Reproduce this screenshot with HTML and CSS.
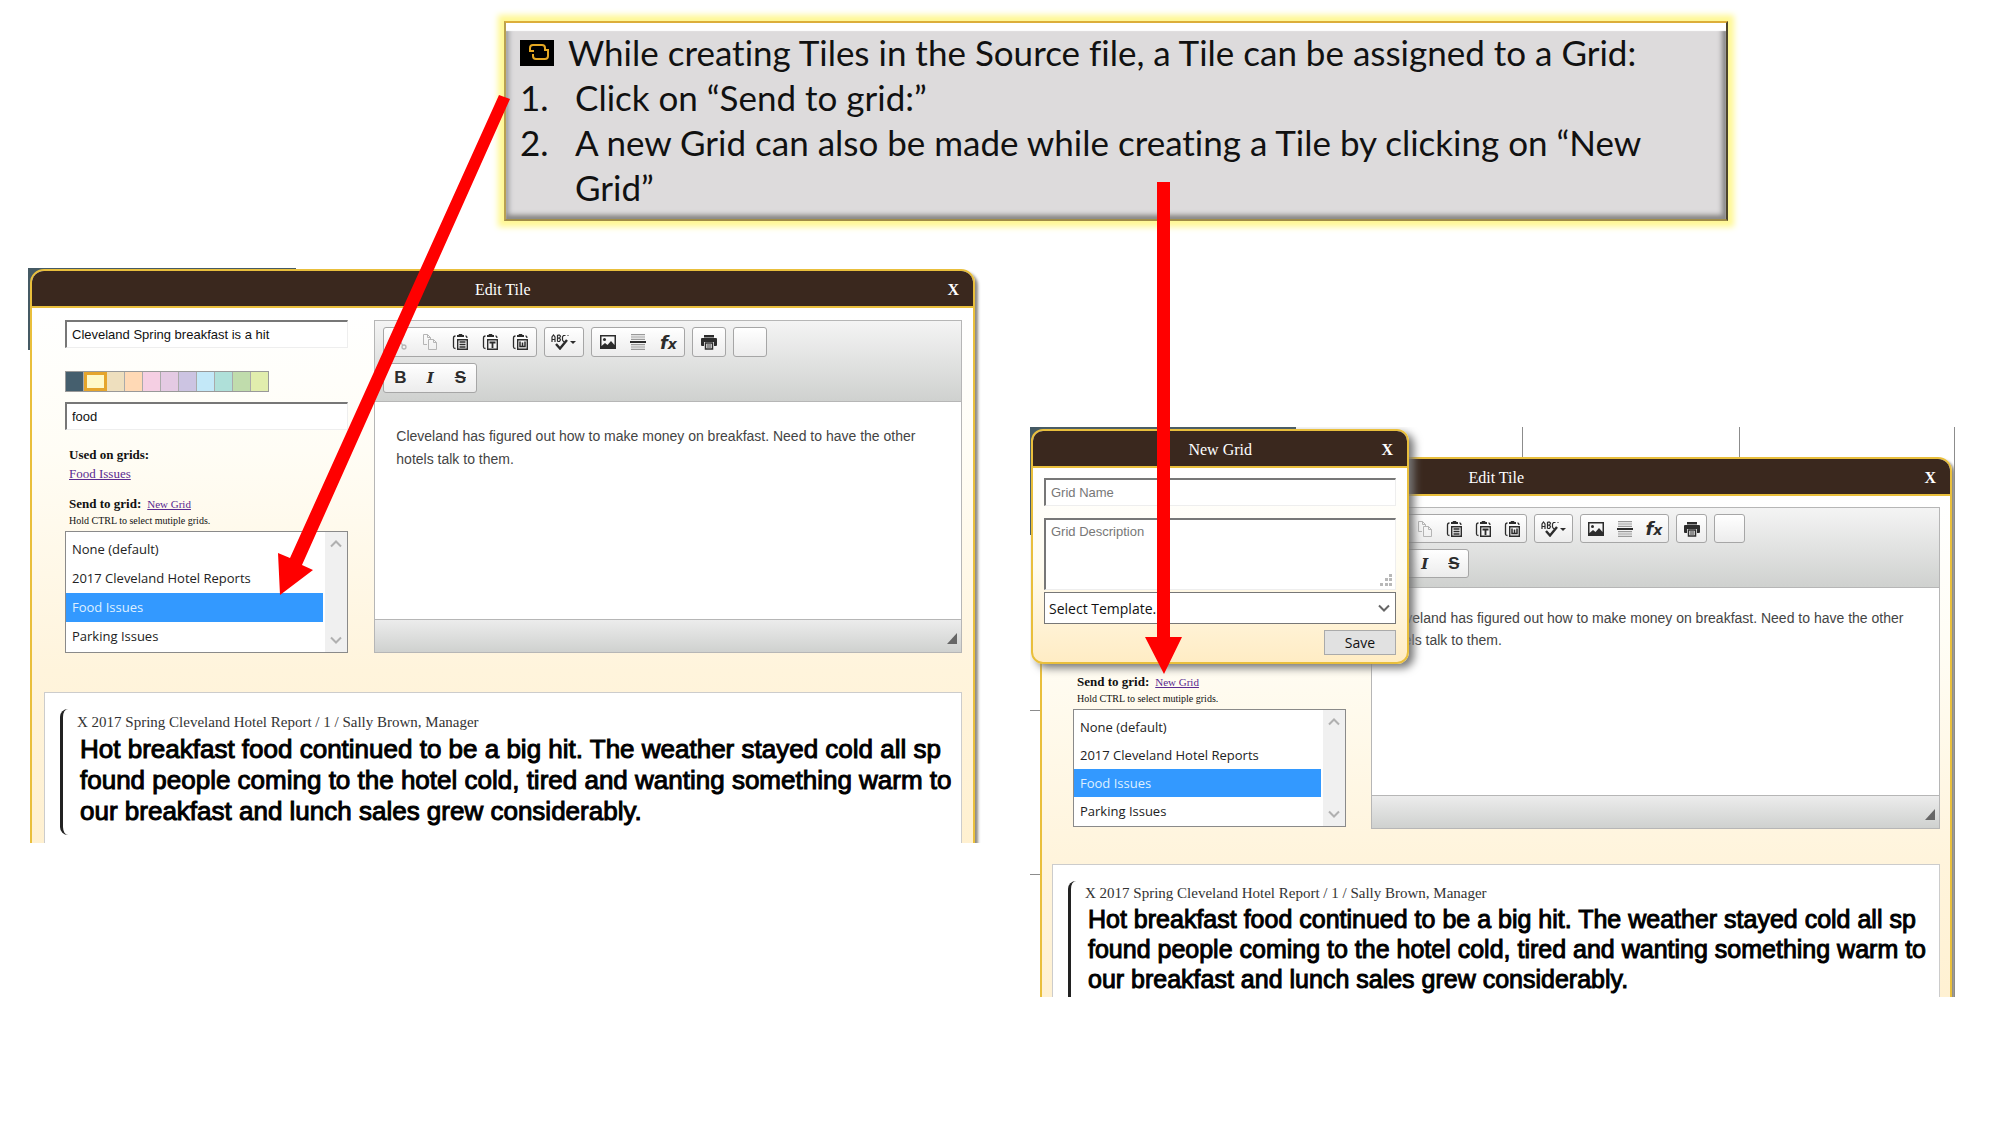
FILE: index.html
```html
<!DOCTYPE html>
<html lang="en">
<head>
<meta charset="utf-8">
<title>Assigning a Tile to a Grid</title>
<link rel="stylesheet" href="styles.css">
</head>
<body>
<svg class="sprite" aria-hidden="true">
  <symbol id="i-cut" viewBox="0 0 16 16"><g fill="none" stroke="currentColor" stroke-width="1.3"><path d="M4 1l6.5 10M12 1L5.500 11"/><circle cx="4" cy="13" r="2"/><circle cx="12" cy="13" r="2"/></g></symbol>
  <symbol id="i-copy" viewBox="0 0 16 16"><g fill="none" stroke="currentColor" stroke-width="1"><path d="M5 10.500H1.500v-10h4l3 3v2"/><path d="M5.500 .5v3h3M6.500 5.500h5l3 3v7h-8zM11.500 5.500v3h3"/></g></symbol>
  <symbol id="i-paste" viewBox="0 0 16 16"><path d="M5 2V1h1.500L7 0h3l.5 1H12v2H5z" fill="currentColor"/><path d="M3.500 2Q1.500 2 1.500 4v9q0 1.500 2 1.500M13.500 2q1.500 0 1.500 2" fill="none" stroke="currentColor" stroke-width="1.300"/><path d="M5.700 5.700h9.600v9.600H5.700z" fill="none" stroke="currentColor" stroke-width="1.400"/><path d="M7.500 8h6M7.500 10.500h6M7.500 13h6" stroke="currentColor" stroke-width="1.300"/></symbol>
  <symbol id="i-paste-text" viewBox="0 0 16 16"><path d="M5 2V1h1.500L7 0h3l.5 1H12v2H5z" fill="currentColor"/><path d="M3.500 2Q1.500 2 1.500 4v9q0 1.500 2 1.500M13.500 2q1.500 0 1.500 2" fill="none" stroke="currentColor" stroke-width="1.300"/><path d="M5.700 5.700h9.600v9.600H5.700z" fill="none" stroke="currentColor" stroke-width="1.400"/><path d="M7.500 8.500h6M10.500 8.500V14" stroke="currentColor" stroke-width="1.800"/></symbol>
  <symbol id="i-paste-word" viewBox="0 0 16 16"><path d="M5 2V1h1.500L7 0h3l.5 1H12v2H5z" fill="currentColor"/><path d="M3.500 2Q1.500 2 1.500 4v9q0 1.500 2 1.500M13.500 2q1.500 0 1.500 2" fill="none" stroke="currentColor" stroke-width="1.300"/><path d="M5.700 5.700h9.600v9.600H5.700z" fill="none" stroke="currentColor" stroke-width="1.400"/><path d="M8 7.500v5h5v-5M10.500 8.500v4" fill="none" stroke="currentColor" stroke-width="1.500"/></symbol>
  <symbol id="i-spell" viewBox="0 0 26 16"><path d="M1 8V3l1.500-2L4 3v5M1 5.500h3M6.500 1v6.500M6.500 1.200h2l1 1-1 2h-2M8.500 4.200l1 1.500-1 1.800h-2M14.500 1.500h-2L11.500 3v3l1 1.500h1M17.500 1.500h-1" fill="none" stroke="currentColor" stroke-width="1.200"/><path d="M5 10l4 4.500 7-8.500" fill="none" stroke="currentColor" stroke-width="2.400"/><path d="M19 7h6l-3 3z" fill="currentColor"/></symbol>
  <symbol id="i-image" viewBox="0 0 16 16"><path d="M0 1h16v14H0zm1.500 1.500V12L5 9l2.500 2L11 7l3.500 4V2.500z" fill="currentColor" fill-rule="evenodd"/><circle cx="4.500" cy="5.500" r="1.500" fill="currentColor"/></symbol>
  <symbol id="i-rule" viewBox="0 0 16 16"><path d="M1 0h14v1.200H1zM1 2.400h14v1.200H1zM1 4.800h14V6H1zM1 10h14v1.200H1zM1 12.400h14v1.200H1zM1 14.800h14V16H1z" fill="#999"/><path d="M0 7h16v2H0z" fill="currentColor"/></symbol>
  <symbol id="i-print" viewBox="0 0 16 16"><path d="M3 1h10v2.500H3zM0 5q0-1 1-1h14q1 0 1 1v6q0 1-1 1h-2V8H3v4H1q-1 0-1-1z" fill="currentColor"/><path d="M4.500 9h7v6h-7z" fill="none" stroke="currentColor" stroke-width="1.500"/><path d="M6 11h4M6 13h4" stroke="currentColor"/></symbol>
  <symbol id="i-up" viewBox="0 0 12 8"><path d="M1 6.500l5-5 5 5" fill="none" stroke="currentColor" stroke-width="2"/></symbol>
  <symbol id="i-down" viewBox="0 0 12 8"><path d="M1 1.500l5 5 5-5" fill="none" stroke="currentColor" stroke-width="2"/></symbol>
</svg>

<main class="slide">
  <section class="callout">
    <p class="callout-lead">
      <svg class="logo" viewBox="0 0 34 26" aria-hidden="true"><path d="M0 0h34v26H0z"/><path d="M10 12V8q0-3 3-3h9q3 0 3 3v2M28 10v6q0 3-3 3h-9q-3 0-3-3v-2M9 11h5M24 10h5" fill="none" stroke="#e5a823" stroke-width="2"/></svg>
      <span>While creating Tiles in the Source file, a Tile can be assigned to a Grid:</span>
    </p>
    <ol class="callout-list">
      <li><span class="num">1.</span><span>Click on “Send to grid:”</span></li>
      <li><span class="num">2.</span><span>A new Grid can also be made while creating a Tile by clicking on “New Grid”</span></li>
    </ol>
  </section>

  <div class="shots">
    <section class="shot shot-left">
      <div class="dialog">
        <header class="bar"><h2>Edit Tile</h2><button class="close" type="button" aria-label="Close">X</button></header>
        <div class="body">
          <div class="form">
            <form class="fields">
              <input class="field" type="text" aria-label="Tile title" value="Cleveland Spring breakfast is a hit">
              <div class="swatches">
                <i class="c1"></i><i class="c2"></i><i class="c3"></i><i class="c4"></i><i class="c5"></i><i class="c6"></i><i class="c7"></i><i class="c8"></i><i class="c9"></i><i class="c10"></i><i class="c11"></i>
              </div>
              <input class="field" type="text" aria-label="Tags" value="food">
              <div class="used"><b>Used on grids:</b><a href="#food">Food Issues</a></div>
              <div class="send"><label for="grids-a">Send to grid:</label><a href="#new">New Grid</a></div>
              <p class="hint">Hold CTRL to select mutiple grids.</p>
              <div class="listbox">
                <select id="grids-a" size="4" multiple>
                  <option>None (default)</option><option>2017 Cleveland Hotel Reports</option><option selected>Food Issues</option><option>Parking Issues</option>
                </select>
                <div class="scroll"><svg><use href="#i-up"/></svg><svg><use href="#i-down"/></svg></div>
              </div>
            </form>
            <div class="editor">
              <div class="tools">
                <div class="row">
                  <div class="group"><button type="button" class="off" aria-label="Cut"><svg><use href="#i-cut"/></svg></button><button type="button" class="off" aria-label="Copy"><svg><use href="#i-copy"/></svg></button><button type="button" aria-label="Paste"><svg><use href="#i-paste"/></svg></button><button type="button" aria-label="Paste as text"><svg><use href="#i-paste-text"/></svg></button><button type="button" aria-label="Paste from Word"><svg><use href="#i-paste-word"/></svg></button></div>
                  <div class="group"><button type="button" class="wide" aria-label="Spell check"><svg><use href="#i-spell"/></svg></button></div>
                  <div class="group"><button type="button" aria-label="Image"><svg><use href="#i-image"/></svg></button><button type="button" aria-label="Horizontal line"><svg><use href="#i-rule"/></svg></button><button type="button" class="fx"><i>f</i><i class="sub">x</i></button></div>
                  <div class="group"><button type="button" aria-label="Print"><svg><use href="#i-print"/></svg></button></div>
                  <div class="group"><button type="button" aria-label="More"></button></div>
                </div>
                <div class="row">
                  <div class="group"><button type="button">B</button><button type="button" class="ital">I</button><button type="button" class="strike">S</button></div>
                </div>
              </div>
              <p class="text">Cleveland has figured out how to make money on breakfast. Need to have the other hotels talk to them.</p>
              <div class="foot"><span class="grip"></span></div>
            </div>
          </div>
          <article class="source">
            <div class="quote">
              <h3>X 2017 Spring Cleveland Hotel Report / 1 / Sally Brown, Manager</h3>
              <p>Hot breakfast food continued to be a big hit. The weather stayed cold all sp<br>found people coming to the hotel cold, tired and wanting something warm to<br>our breakfast and lunch sales grew considerably.</p>
            </div>
          </article>
        </div>
      </div>
    </section>

    <section class="shot shot-right">
      <div class="dialog">
        <header class="bar"><h2>Edit Tile</h2><button class="close" type="button" aria-label="Close">X</button></header>
        <div class="body">
          <div class="form">
            <form class="fields">
              <div class="send"><label for="grids-b">Send to grid:</label><a href="#new">New Grid</a></div>
              <p class="hint">Hold CTRL to select mutiple grids.</p>
              <div class="listbox">
                <select id="grids-b" size="4" multiple>
                  <option>None (default)</option><option>2017 Cleveland Hotel Reports</option><option selected>Food Issues</option><option>Parking Issues</option>
                </select>
                <div class="scroll"><svg><use href="#i-up"/></svg><svg><use href="#i-down"/></svg></div>
              </div>
            </form>
            <div class="editor">
              <div class="tools">
                <div class="row">
                  <div class="group"><button type="button" class="off" aria-label="Cut"><svg><use href="#i-cut"/></svg></button><button type="button" class="off" aria-label="Copy"><svg><use href="#i-copy"/></svg></button><button type="button" aria-label="Paste"><svg><use href="#i-paste"/></svg></button><button type="button" aria-label="Paste as text"><svg><use href="#i-paste-text"/></svg></button><button type="button" aria-label="Paste from Word"><svg><use href="#i-paste-word"/></svg></button></div>
                  <div class="group"><button type="button" class="wide" aria-label="Spell check"><svg><use href="#i-spell"/></svg></button></div>
                  <div class="group"><button type="button" aria-label="Image"><svg><use href="#i-image"/></svg></button><button type="button" aria-label="Horizontal line"><svg><use href="#i-rule"/></svg></button><button type="button" class="fx"><i>f</i><i class="sub">x</i></button></div>
                  <div class="group"><button type="button" aria-label="Print"><svg><use href="#i-print"/></svg></button></div>
                  <div class="group"><button type="button" aria-label="More"></button></div>
                </div>
                <div class="row">
                  <div class="group"><button type="button" aria-label="Bold"></button><button type="button" class="ital">I</button><button type="button" class="strike">S</button></div>
                </div>
              </div>
              <p class="text">Cleveland has figured out how to make money on breakfast. Need to have the other hotels talk to them.</p>
              <div class="foot"><span class="grip"></span></div>
            </div>
          </div>
          <article class="source">
            <div class="quote">
              <h3>X 2017 Spring Cleveland Hotel Report / 1 / Sally Brown, Manager</h3>
              <p>Hot breakfast food continued to be a big hit. The weather stayed cold all sp<br>found people coming to the hotel cold, tired and wanting something warm to<br>our breakfast and lunch sales grew considerably.</p>
            </div>
          </article>
        </div>
      </div>

      <div class="popup">
        <header class="bar"><h2>New Grid</h2><button class="close" type="button" aria-label="Close">X</button></header>
        <form class="popup-form">
          <input class="field" type="text" placeholder="Grid Name" aria-label="Grid name">
          <div class="area"><textarea class="field" placeholder="Grid Description" aria-label="Grid description"></textarea>
            <svg class="dots" viewBox="0 0 12 12" aria-hidden="true"><path d="M9 0h3v3H9zM5 4h3v3H5zM9 4h3v3H9zM0 9h3v3H0zM5 9h3v3H5zM9 9h3v3H9z" fill="#b8b8b8"/></svg></div>
          <div class="combo"><select aria-label="Template"><option>Select Template...</option></select><svg><use href="#i-down"/></svg></div>
          <button class="save" type="button">Save</button>
        </form>
      </div>
    </section>
  </div>

  <svg class="arrows" viewBox="0 0 2000 1125" aria-hidden="true">
    <path d="M499 95L510 99 302 565 313 570 280 595 278 553 290 558z" fill="red"/>
    <path d="M1157 182h13v455h12l-18 37-19-37h12z" fill="red"/>
  </svg>
</main>
</body>
</html>
```
FILE: styles.css
```css
* { box-sizing: border-box; }

body {
  margin: 0;
  background: #fff;
  color: #111;
  font-family: "Liberation Sans", sans-serif;
}

h2, h3, p, ol { margin: 0; padding: 0; font-weight: 400; }
a { color: #5a2a91; }
button, input, select, textarea { font: inherit; color: inherit; margin: 0; }

.sprite { position: absolute; width: 0; height: 0; }

.slide {
  position: relative;
  min-height: 100vh;
  padding-top: 21px;
  overflow: hidden;
}

/* Instruction box */
.callout {
  width: 61.2%;
  min-height: 200px;
  margin-left: 25.2%;
  padding: 7px 60px 0 14px;
  background: #dddbdc;
  border: 2px solid;
  border-color: #dcae3a #4c442c #a08c48 #b8a050;
  box-shadow: 0 0 6px 6px #fff894, inset 0 8px 1px #fff, inset -4px 0 5px #8a898a, inset 0 -4px 5px #8c8a88, inset 4px 0 4px #b9b8bc;
  font-family: Lato, sans-serif;
  font-size: 35px;
  font-variant-ligatures: none;
  line-height: 45px;
}
.callout-lead { display: flex; align-items: center; gap: 14px; white-space: nowrap; }
.logo { width: 34px; height: 26px; }
.callout-list { list-style: none; }
.callout-list li { display: flex; }
.num { flex: 0 0 55px; }

/* The two screens */
.shots {
  display: grid;
  grid-template-columns: 953fr 925fr;
  gap: 49px;
  margin-top: 47px;
  padding: 0 45px 0 28px;
  align-items: start;
}
.shot { position: relative; overflow: hidden; }
.shot-left {
  height: 575px;
  padding: 1px 6px 0 2px;
  background: linear-gradient(90deg, #455a64 0 268px, #fff 268px) 0 0 / 100% 12px no-repeat, linear-gradient(#455a64, #455a64) 0 0 / 4px 82px no-repeat;
}
.shot-right {
  height: 570px;
  margin-top: 159px;
  padding: 30px 3px 0 10px;
  background:
    linear-gradient(#455a64, #455a64) 0 0 / 266px 12px no-repeat,
    linear-gradient(#455a64, #455a64) 0 0 / 4px 108px no-repeat,
    linear-gradient(#8c8c8c, #8c8c8c) 492px 0 / 1px 40px no-repeat,
    linear-gradient(#8c8c8c, #8c8c8c) 709px 0 / 1px 40px no-repeat,
    linear-gradient(#8c8c8c, #8c8c8c) 100% 0 / 1px 100% no-repeat,
    linear-gradient(#8c8c8c, #8c8c8c) 0 283px / 12px 1px no-repeat,
    linear-gradient(#8c8c8c, #8c8c8c) 0 447px / 12px 1px no-repeat;
}

.dialog {
  min-height: 620px;
  border: 2px solid #e9bf3c;
  border-radius: 14px 14px 0 0;
  overflow: hidden;
  box-shadow: 3px 3px 3px #8f8b84;
  background: linear-gradient(#fff 40px, #fffdf5 180px, #fff4dc 400px, #ffefcc);
}

.bar {
  display: flex;
  align-items: center;
  height: 37px;
  padding: 2px 14px 0 26px;
  background: #3a281e;
  border-bottom: 2px solid #e9bf3c;
  color: #fff;
  font-family: "Liberation Serif", serif;
}
.bar h2 { flex: 1; font-size: 16px; line-height: 20px; text-align: center; }
.close { padding: 0; border: 0; background: none; font-size: 16px; font-weight: 700; line-height: 20px; }

.body { padding: 12px 11px 0 12px; }
.form { display: grid; grid-template-columns: 283fr 587fr; gap: 26px; padding-left: 21px; }
.shot-right .form { grid-template-columns: 273fr 568fr; gap: 25px; padding-left: 21px; }
.shot-right .body { padding: 11px 10px 0; }

/* Tile fields */
.fields {
  display: flex;
  flex-direction: column;
  min-width: 0;
  padding-bottom: 2px;
  font-family: "Liberation Serif", serif;
}
.field {
  display: block;
  width: 100%;
  height: 28px;
  padding: 0 5px;
  border: 1px solid #eee;
  border-top: 2px solid #777;
  border-left: 2px solid #777;
  background: #fff;
  font-family: "Liberation Sans", sans-serif;
  font-size: 13px;
}
.field::placeholder { color: #777; opacity: 1; }
.swatches { display: flex; width: 204px; height: 21px; margin: 23px 0 10px; border: 1px solid #999; }
.swatches i { flex: 1 1 0; border-right: 1px solid #aaa; }
.c1 { background: #455f6e; }
.swatches .c2 { border: 3px solid #e5a52c; background: #fff9c9; }
.c3 { background: #eedfbe; }
.c4 { background: #ffd9b5; }
.c5 { background: #f5cfe3; }
.c6 { background: #e4cae3; }
.c7 { background: #ccc4e2; }
.c8 { background: #c3e8f8; }
.c9 { background: #afe0d9; }
.c10 { background: #c0dcac; }
.swatches .c11 { border: 0; background: #e1edad; }
.used { display: flex; flex-direction: column; margin: 15px 0 11px 4px; font-size: 13px; line-height: 19px; }
.send { display: flex; align-items: baseline; gap: 6px; margin-left: 4px; font-size: 13px; line-height: 19px; }
.shot-right .send { margin-top: auto; }
.send label { font-weight: 700; }
.send a { font-size: 11px; }
.hint { margin: 0 0 3px 4px; font-size: 10px; line-height: 14px; }
.listbox { display: flex; height: 122px; border: 1px solid #8a8a8a; background: #fff; font-family: "Open Sans", sans-serif; font-size: 13px; }
.shot-right .listbox { height: 118px; }
.listbox select { flex: 1; min-width: 0; padding: 3px 0 0; border: 0; outline: 0; overflow: hidden; background: #fff; }
.listbox option { min-height: 29px; padding: 5px 6px; line-height: 19px; color: #222; }
.shot-right .listbox option { min-height: 28px; padding: 5px 6px 4px; }
.listbox option:checked { background: linear-gradient(#39f, #39f); color: #dff0ff; }
.scroll { display: flex; flex-direction: column; justify-content: space-between; align-items: center; width: 22px; margin-left: 2px; padding: 8px 0; background: #f0f0f0; color: #b0b0b0; }
.scroll svg { width: 12px; height: 8px; }

/* Rich text editor */
.editor { display: flex; flex-direction: column; min-width: 0; height: 333px; border: 1px solid #b6b6b6; background: #fff; }
.shot-right .editor { height: 322px; }
.tools { height: 81px; padding: 6px 8px; border-bottom: 1px solid #b6b6b6; background: linear-gradient(#f4f4f4, #cfd1cf); }
.row { display: flex; gap: 7px; margin-bottom: 6px; }
.group { display: flex; height: 30px; padding: 0 1px; border: 1px solid #a6a6a6; border-radius: 3px; background: linear-gradient(#fff, #ececec); }
.group button { display: flex; align-items: center; justify-content: center; width: 30px; padding: 0; border: 0; background: none; color: #2c2c2c; font-size: 17px; font-weight: 700; }
.group svg { width: 16px; height: 16px; }
.group .off { color: #b5b5b5; }
.group .wide { width: 36px; }
.group .wide svg { width: 26px; }
.group .ital { font-family: "DejaVu Serif", serif; font-size: 15px; font-style: italic; }
.group .strike { text-decoration: line-through; }
.group .fx { font-family: "DejaVu Sans", sans-serif; font-size: 18px; }
.group .sub { padding-top: 3px; font-size: 14px; }
.shot-right .tools { height: 80px; }
.shot-right .group { height: 29px; padding: 0; }
.shot-right .group button { width: 29px; }
.shot-right .group .wide { width: 37px; }
.text { flex: 1; padding: 23px 21px 0; color: #444; font-size: 14px; line-height: 23px; }
.shot-right .text { padding: 19px 12px 0; line-height: 22px; }
.foot { display: flex; align-items: center; justify-content: flex-end; height: 33px; padding: 4px 4px 0 0; border-top: 1px solid #b6b6b6; background: linear-gradient(#ececec, #cfd1cf); }
.grip { border-left: 10px solid transparent; border-bottom: 11px solid #666; }

/* Source document */
.source { height: 220px; margin-top: 37px; padding: 16px 0 0 15px; border: 1px solid #ccc; background: #fff; overflow: hidden; }
.shot-right .source { margin-top: 35px; }
.quote { height: 126px; padding: 4px 0 0 14px; border-left: 3px solid #222; border-radius: 8px 0 0 8px; white-space: nowrap; }
.shot-right .quote { height: 150px; padding-top: 3px; }
.quote h3 { font-family: "Liberation Serif", serif; font-size: 15px; line-height: 19px; color: #333; }
.quote p { margin: 2px 0 0 3px; color: #000; font-size: 26px; line-height: 31px; -webkit-text-stroke: 1px #000; }
.shot-right .quote p { margin-top: 1px; font-size: 25px; line-height: 30px; }

/* New grid popup */
.popup {
  position: absolute;
  top: 2px;
  left: 1px;
  width: 378px;
  border: 2px solid #e9bf3c;
  border-radius: 12px;
  overflow: hidden;
  background: linear-gradient(#fff 40px, #fffcf0, #ffecc4);
  box-shadow: 5px 4px 8px #777;
}
.popup-form { display: flex; flex-direction: column; padding: 10px 11px 7px; }
.area { position: relative; margin: 12px 0 2px; }
.area .field { height: 72px; padding-top: 4px; resize: none; }
.dots { position: absolute; right: 4px; bottom: 4px; width: 12px; height: 12px; }
.combo { display: flex; align-items: center; height: 32px; padding-right: 5px; border: 1px solid #777; background: #fff; font-family: "Open Sans", sans-serif; font-size: 14px; }
.combo select { flex: 1; padding: 0 4px; border: 0; appearance: none; background: none; color: #111; }
.combo svg { width: 12px; height: 8px; color: #666; }
.save { align-self: flex-end; width: 72px; height: 25px; margin-top: 6px; padding: 0; border: 1px solid #aaa; background: #e1e1e1; font-family: "Open Sans", sans-serif; font-size: 14px; }

.arrows { position: absolute; top: 0; left: 0; width: 100%; pointer-events: none; }
```
